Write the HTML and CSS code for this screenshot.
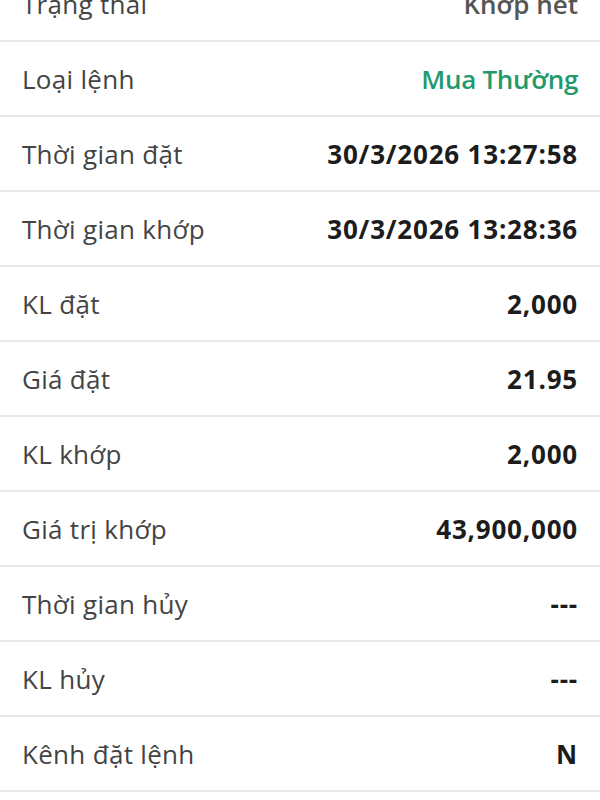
FILE: index.html
```html
<!DOCTYPE html>
<html lang="vi">
<head>
    <meta charset="UTF-8">
    <meta name="viewport" content="width=device-width, initial-scale=1.0">
    <title>Chi tiết lệnh</title>
    <link rel="stylesheet" href="styles.css">
</head>
<body>
    <div class="order-detail">
        <div class="detail-row">
            <div class="detail-label">Trạng thái</div>
            <div class="detail-value muted">Khớp hết</div>
        </div>
        <div class="detail-row">
            <div class="detail-label">Loại lệnh</div>
            <div class="detail-value buy">Mua Thường</div>
        </div>
        <div class="detail-row">
            <div class="detail-label">Thời gian đặt</div>
            <div class="detail-value">30/3/2026 13:27:58</div>
        </div>
        <div class="detail-row">
            <div class="detail-label">Thời gian khớp</div>
            <div class="detail-value">30/3/2026 13:28:36</div>
        </div>
        <div class="detail-row">
            <div class="detail-label">KL đặt</div>
            <div class="detail-value">2,000</div>
        </div>
        <div class="detail-row">
            <div class="detail-label">Giá đặt</div>
            <div class="detail-value">21.95</div>
        </div>
        <div class="detail-row">
            <div class="detail-label">KL khớp</div>
            <div class="detail-value">2,000</div>
        </div>
        <div class="detail-row">
            <div class="detail-label">Giá trị khớp</div>
            <div class="detail-value">43,900,000</div>
        </div>
        <div class="detail-row">
            <div class="detail-label">Thời gian hủy</div>
            <div class="detail-value">---</div>
        </div>
        <div class="detail-row">
            <div class="detail-label">KL hủy</div>
            <div class="detail-value">---</div>
        </div>
        <div class="detail-row">
            <div class="detail-label">Kênh đặt lệnh</div>
            <div class="detail-value">N</div>
        </div>
    </div>
</body>
</html>
```

FILE: styles.css
```css
body {
    font-family: 'Open Sans', 'Noto Sans', sans-serif;
    background-color: #ffffff;
    margin: 0;
    overflow: hidden;
}

.order-detail {
    margin-top: -33px; /* trang đã cuộn xuống một chút */
}

.detail-row {
    display: flex;
    justify-content: space-between;
    align-items: center;
    height: 73px;
    padding: 0 22px;
    border-bottom: 2px solid #e8e8e8;
}

.detail-label {
    font-size: 26px;
    font-weight: 500;
    letter-spacing: 0.3px;
    color: #444;
}

.detail-value {
    font-size: 26px;
    font-weight: 700;
    letter-spacing: 0.8px;
    color: #1c1c1c;
}

.detail-value.muted {
    font-weight: 600;
    letter-spacing: 0;
    color: #555;
}

.detail-value.buy {
    font-weight: 600;
    letter-spacing: -0.3px;
    color: #1f9a6c;
}
```
